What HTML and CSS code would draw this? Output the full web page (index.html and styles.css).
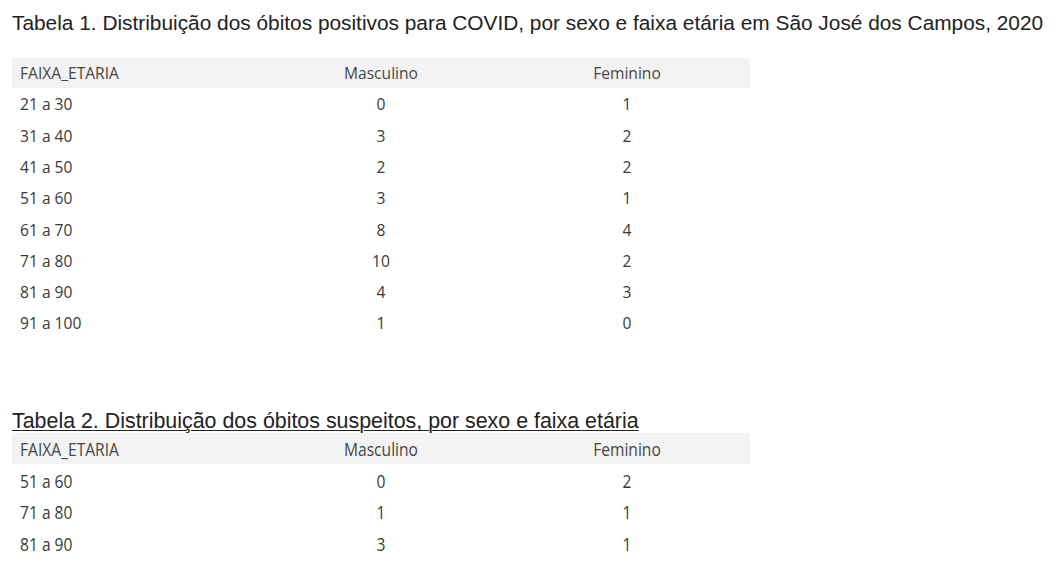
FILE: index.html
```html
<!DOCTYPE html>
<html lang="pt">
<head>
<meta charset="utf-8">
<link rel="stylesheet" href="styles.css">
</head>
<body>
<section class="block block-1">
  <h1 class="title">Tabela 1. Distribuição dos óbitos positivos para COVID, por sexo e faixa etária em São José dos Campos, 2020</h1>
  <div class="table">
    <div class="row head"><span class="c1">FAIXA_ETARIA</span><span class="c">Masculino</span><span class="c">Feminino</span></div>
    <div class="row"><span class="c1">21 a 30</span><span class="c">0</span><span class="c">1</span></div>
    <div class="row"><span class="c1">31 a 40</span><span class="c">3</span><span class="c">2</span></div>
    <div class="row"><span class="c1">41 a 50</span><span class="c">2</span><span class="c">2</span></div>
    <div class="row"><span class="c1">51 a 60</span><span class="c">3</span><span class="c">1</span></div>
    <div class="row"><span class="c1">61 a 70</span><span class="c">8</span><span class="c">4</span></div>
    <div class="row"><span class="c1">71 a 80</span><span class="c">10</span><span class="c">2</span></div>
    <div class="row"><span class="c1">81 a 90</span><span class="c">4</span><span class="c">3</span></div>
    <div class="row"><span class="c1">91 a 100</span><span class="c">1</span><span class="c">0</span></div>
  </div>
</section>
<section class="block block-2">
  <h2 class="title title-2">Tabela 2. Distribuição dos óbitos suspeitos, por sexo e faixa etária</h2>
  <div class="table table-2">
    <div class="row head"><span class="c1">FAIXA_ETARIA</span><span class="c">Masculino</span><span class="c">Feminino</span></div>
    <div class="row"><span class="c1">51 a 60</span><span class="c">0</span><span class="c">2</span></div>
    <div class="row"><span class="c1">71 a 80</span><span class="c">1</span><span class="c">1</span></div>
    <div class="row"><span class="c1">81 a 90</span><span class="c">3</span><span class="c">1</span></div>
  </div>
</section>
</body>
</html>
```
FILE: styles.css
```css
html, body {
  margin: 0;
  padding: 0;
  background: #ffffff;
}
body {
  width: 1060px;
  height: 570px;
  overflow: hidden;
}
.block-1 {
  padding: 11px 0 0 12px;
}
.title {
  margin: 0;
  font-family: "Liberation Sans", Arial, sans-serif;
  font-weight: normal;
  font-size: 20.85px;
  line-height: 24px;
  color: #222222;
  white-space: nowrap;
}
.table {
  margin-top: 23px;
  width: 738px;
  font-family: "Open Sans", sans-serif;
  font-size: 15.6px;
  color: #3a3a3a;
}
.row {
  display: grid;
  grid-template-columns: 1fr 1fr 1fr;
  height: 31.3px;
  padding-top: 1.5px;
  box-sizing: border-box;
  align-items: center;
}
.row.head {
  height: 30px;
  padding-top: 0;
  background: #f3f3f3;
  color: #474747;
}
.c1 {
  padding-left: 8px;
}
.c {
  text-align: center;
}
.block-2 {
  padding: 72px 0 0 12px;
}
.title-2 {
  font-size: 21.4px;
  line-height: 23px;
  text-decoration: underline;
  text-underline-offset: 2px;
  text-decoration-thickness: 1px;
}
.table-2 {
  margin-top: 0;
}
.table-2 .row {
  height: 31.5px;
  padding-top: 1px;
}
.table-2 .row.head {
  height: 31px;
  padding-top: 0;
}
.table-2 .row span {
  display: inline-block;
  transform: scaleY(1.15);
}
```
